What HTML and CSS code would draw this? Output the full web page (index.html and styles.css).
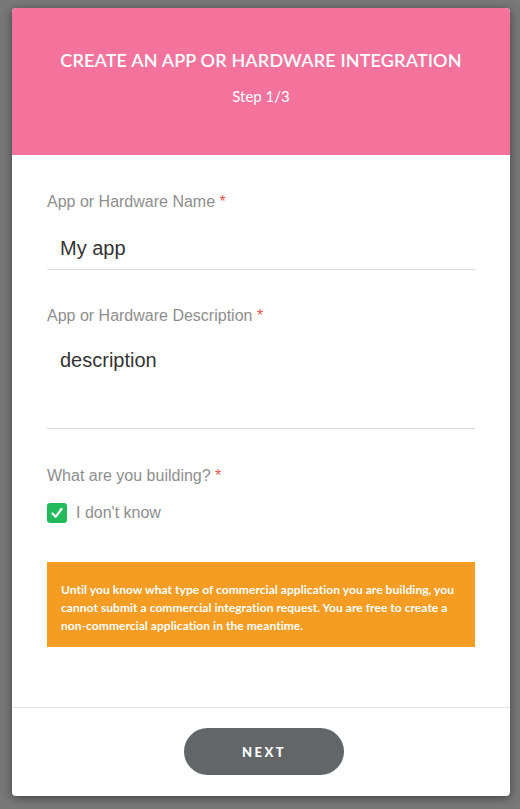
FILE: index.html
```html
<!DOCTYPE html>
<html>
<head>
<meta charset="utf-8">
<link rel="stylesheet" href="styles.css">
</head>
<body>
<div class="card">
  <div class="header">
    <div class="title">CREATE AN APP OR HARDWARE INTEGRATION</div>
    <div class="step">Step 1/3</div>
  </div>
  <div class="content">
    <div class="label">App or Hardware Name <span class="req">*</span></div>
    <div class="input">My app</div>
    <div class="label gap">App or Hardware Description <span class="req">*</span></div>
    <div class="input area">description</div>
    <div class="label gap2">What are you building? <span class="req">*</span></div>
    <div class="check-row">
      <span class="box"><svg width="14" height="14" viewBox="0 0 14 14"><path d="M2.5 7.5 L5.6 10.8 L11.5 3" fill="none" stroke="#fff" stroke-width="2.2" stroke-linecap="round" stroke-linejoin="round"/></svg></span>
      <span class="check-label">I don't know</span>
    </div>
    <div class="notice">Until you know what type of commercial application you are building, you cannot submit a commercial integration request. You are free to create a non-commercial application in the meantime.</div>
  </div>
  <div class="footer">
    <button class="next">NEXT</button>
  </div>
</div>
</body>
</html>
```
FILE: styles.css
```css
html, body { margin: 0; padding: 0; }
body {
  background: #787878;
  width: 520px;
  height: 809px;
  overflow: hidden;
  font-family: "Liberation Sans", Arial, sans-serif;
}
.card {
  margin: 8px 0 0 12px;
  width: 498px;
  height: 788px;
  background: #fff;
  border-radius: 4px;
  overflow: hidden;
  box-shadow: 0 2px 10px rgba(0,0,0,0.45);
  display: flex;
  flex-direction: column;
}
.header {
  background: #f4739d;
  height: 147px;
  box-sizing: border-box;
  padding-top: 40px;
  text-align: center;
  color: #fff;
  font-family: "Lato", sans-serif;
}
.title {
  font-size: 18px;
  line-height: 24px;
  font-weight: 600;
  letter-spacing: 0.15px;
}
.step {
  margin-top: 14px;
  font-size: 15px;
  line-height: 20px;
}
.content {
  flex: 1;
  padding: 37px 35px 0;
}
.label {
  font-size: 16px;
  line-height: 20px;
  color: #8e8e8e;
}
.label.gap { margin-top: 36px; }
.label.gap2 { margin-top: 37px; }
.req { color: #e8554e; }
.input {
  margin-top: 12px;
  height: 46px;
  box-sizing: border-box;
  padding: 12px 13px 0;
  font-size: 20px;
  line-height: 24px;
  color: #333;
  border-bottom: 1px solid #d8d8d8;
}
.input.area {
  height: 91px;
  padding-top: 10px;
}
.check-row {
  margin-top: 17px;
  display: flex;
  align-items: center;
  gap: 9px;
}
.box {
  width: 20px;
  height: 20px;
  border-radius: 3px;
  background: #22bb5b;
  display: flex;
  align-items: center;
  justify-content: center;
}
.check-label {
  font-size: 16px;
  color: #8e8e8e;
}
.notice {
  margin-top: 39px;
  background: #f59c22;
  color: #fff;
  font-family: "Lato", sans-serif;
  font-weight: 700;
  font-size: 12px;
  letter-spacing: 0.05px;
  line-height: 18px;
  padding: 19px 14px 12px;
}
.footer {
  height: 89px;
  box-sizing: border-box;
  border-top: 1px solid #e4e4e4;
  display: flex;
  justify-content: center;
  padding: 20px 0 0 6px;
}
.next {
  width: 160px;
  height: 47px;
  border: none;
  border-radius: 24px;
  background: #636669;
  color: #fff;
  font-family: "Lato", sans-serif;
  font-weight: 900;
  font-size: 13px;
  letter-spacing: 2.5px;
  padding: 0;
}
```
